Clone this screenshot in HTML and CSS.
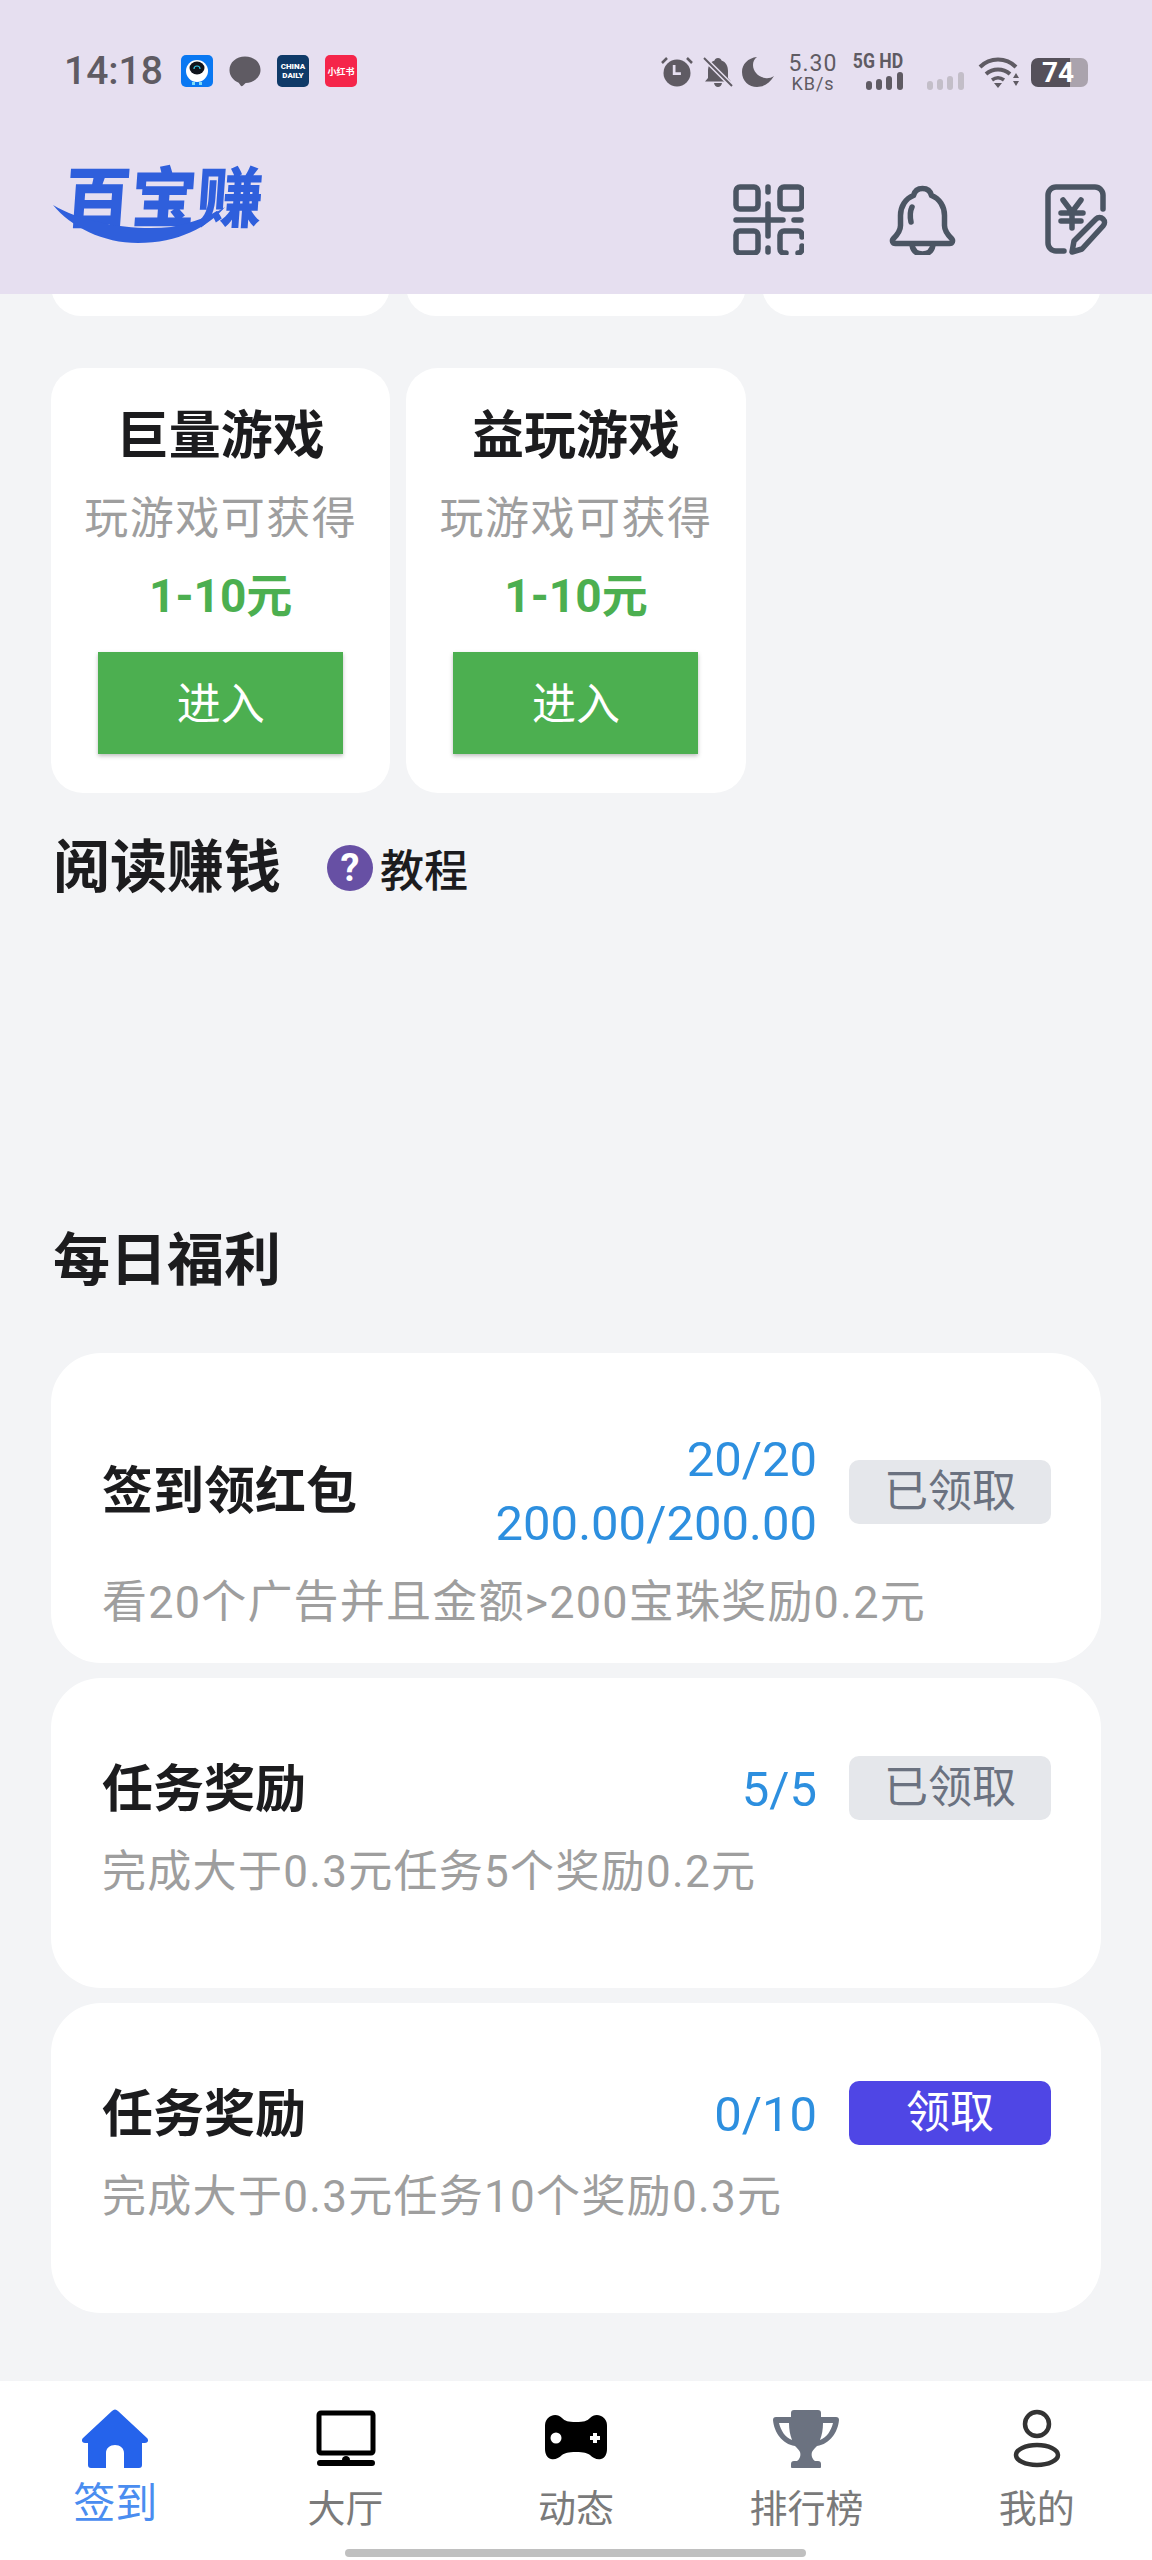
FILE: index.html
```html
<!DOCTYPE html>
<html lang="zh-CN">
<head>
    <meta charset="UTF-8">
    <meta name="viewport" content="width=device-width, initial-scale=1.0">
    <title>百宝赚</title>
    <link rel="stylesheet" href="styles.css">
</head>
<body>
    <div class="page">
        <header class="header">
            <div class="status-bar">
                <div class="status-left">
                    <span class="time">14:18</span>
                    <svg class="app-icon" viewBox="0 0 32 32">
                        <rect width="32" height="32" rx="5" fill="#0a78f2"/>
                        <ellipse cx="16" cy="16" rx="11" ry="11" fill="#fff"/>
                        <ellipse cx="16" cy="13" rx="7.500" ry="6.500" fill="#10141c"/>
                        <path d="M13 14a3 3 0 0 1 6 0" fill="none" stroke="#35c8e8" stroke-width="1.200"/>
                        <rect x="11" y="27" width="3" height="3" fill="#7fdcf5"/>
                        <rect x="18" y="27" width="3" height="3" fill="#7fdcf5"/>
                    </svg>
                    <svg class="app-icon" viewBox="0 0 33 32">
                        <path d="M16.500 1C7.500 1 .5 7 .5 15c0 6 4 11 9.500 13l2 3c.5.8 1.500.8 2.200.2l3-2.700C25.500 28 32.500 22.500 32.500 15c0-8-7-14-16-14z" fill="#5f5b63"/>
                    </svg>
                    <span class="app-badge app-badge-daily">CHINA<br>DAILY</span>
                    <span class="app-badge app-badge-red">小红书</span>
                </div>
                <div class="status-right">
                    <svg class="st-alarm" viewBox="0 0 32 30">
                        <circle cx="16" cy="16" r="13.500" fill="#5f5b63"/>
                        <path d="M12 10h3v8h6v3h-9z" fill="#e6dff0" transform="translate(1 -1) scale(.9 .9)"/>
                        <path d="M1 6l5-5M31 6l-5-5" stroke="#5f5b63" stroke-width="2.500"/>
                    </svg>
                    <svg class="st-mute" viewBox="0 0 30 30">
                        <path d="M15 1c-2 0-3 1-3.500 2.500C7 5 5 9 5 14v7l-3 3.500h26L25 21v-7c0-5-2-9-6.500-10.500C18 2 17 1 15 1zM11 26c.5 2.500 2 4 4 4s3.500-1.500 4-4z" fill="#5f5b63"/>
                        <path d="M1 1l28 28" stroke="#e6dff0" stroke-width="5"/>
                        <path d="M1 1l28 28" stroke="#5f5b63" stroke-width="2"/>
                    </svg>
                    <svg class="st-moon" viewBox="0 0 32 30">
                        <path d="M15 0C6 1 0 7 0 15c0 9 7 15 15 15 7 0 13-4 17-11-3 2-6 2.500-9 2-7-1-12-7-12-13 0-3 1-6 4-8z" fill="#5f5b63"/>
                    </svg>
                    <div class="st-speed"><span>5.30</span><span class="st-speed-unit">KB/s</span></div>
                    <div class="st-net">
                        <span class="st-net-label">5G HD</span>
                        <svg class="st-bars" viewBox="0 0 37 18">
                            <rect x="0" y="9" width="6" height="9" rx="3" fill="#5f5b63"/>
                            <rect x="10" y="7" width="6" height="11" rx="3" fill="#5f5b63"/>
                            <rect x="20" y="4" width="6" height="14" rx="3" fill="#5f5b63"/>
                            <rect x="31" y="0" width="6" height="18" rx="3" fill="#5f5b63"/>
                        </svg>
                    </div>
                    <svg class="st-bars st-bars-off" viewBox="0 0 37 18">
                        <rect x="0" y="9" width="6" height="9" rx="3" fill="#c3bec8"/>
                        <rect x="10" y="7" width="6" height="11" rx="3" fill="#c3bec8"/>
                        <rect x="20" y="4" width="6" height="14" rx="3" fill="#c3bec8"/>
                        <rect x="31" y="0" width="6" height="18" rx="3" fill="#c3bec8"/>
                    </svg>
                    <svg class="st-wifi" viewBox="0 0 41 31">
                        <path d="M2 10c10-10 26-10 36 0" fill="none" stroke="#5f5b63" stroke-width="4"/>
                        <path d="M8 17c7-6 17-6 24 0" fill="none" stroke="#5f5b63" stroke-width="4"/>
                        <path d="M14 23c4-3 8-3 12 0" fill="none" stroke="#5f5b63" stroke-width="3.500"/>
                        <path d="M16 26h8l-4 5zM38 16l3 5h-6zM35 24h6l-3 5z" fill="#5f5b63"/>
                    </svg>
                    <div class="battery">74</div>
                </div>
            </div>
            <div class="topbar">
                <div class="logo">
                    <span class="logo-text">百宝赚</span>
                    <svg class="logo-swoosh" viewBox="0 0 212 78">
                        <path d="M0 40C30 58 80 66 118 62 140 58 160 50 172 42 155 62 125 78 85 78 50 78 18 62 0 40z" fill="#2f5fdc"/>
                    </svg>
                </div>
                <div class="top-icons">
                    <svg class="top-icon" viewBox="0 0 71 71">
                        <g fill="none" stroke="#4b5563" stroke-width="5.500" stroke-linecap="round">
                            <rect x="3" y="3" width="22" height="22" rx="4"/>
                            <rect x="47" y="3" width="22" height="22" rx="4"/>
                            <rect x="3" y="47" width="22" height="22" rx="4"/>
                            <path d="M3 36h47M61 36h7M35 3v5M35 20v32M35 64v4"/>
                            <path d="M53 69h-2a4 4 0 0 1-4-4V51a4 4 0 0 1 4-4h14a4 4 0 0 1 4 4v2M69 62v3a4 4 0 0 1-4 4"/>
                        </g>
                    </svg>
                    <svg class="top-icon" viewBox="0 0 71 71">
                        <g fill="none" stroke="#4b5563" stroke-width="5.500" stroke-linecap="round" stroke-linejoin="round">
                            <path d="M35.500 4.500c-5 0-8 3-9 7-8 3-13 11-13 20v10c0 5-3 9-7 13-2 2-1 5 2 5h54c3 0 4-3 2-5-4-4-7-8-7-13V31.500c0-9-5-17-13-20-1-4-4-7-9-7z"/>
                            <path d="M25 23c-2 4-2 10-1 15"/>
                            <path d="M25 61c1 6 5 9 10.500 9s9.500-3 10.500-9"/>
                        </g>
                    </svg>
                    <svg class="top-icon" viewBox="0 0 71 71">
                        <g fill="none" stroke="#4b5563" stroke-width="5.500" stroke-linecap="round" stroke-linejoin="round">
                            <path d="M62 25V11a8 8 0 0 0-8-8H15a8 8 0 0 0-8 8v48a8 8 0 0 0 8 8h8"/>
                            <path d="M22 16l9 12 9-12M20 29h22M20 37h20M31 28v16"/>
                            <path d="M33 57l22-22c2-2 5-2 7 0s2 5 0 7L41 65l-10 3z"/>
                        </g>
                    </svg>
                </div>
            </div>
        </header>

        <main class="content">
            <div class="game-grid game-grid-cut">
                <div class="game-card game-card-cut"></div>
                <div class="game-card game-card-cut"></div>
                <div class="game-card game-card-cut"></div>
            </div>

            <div class="game-grid">
                <div class="game-card">
                    <h3 class="game-title">巨量游戏</h3>
                    <p class="game-sub">玩游戏可获得</p>
                    <p class="game-price">1-10元</p>
                    <a class="game-btn">进入</a>
                </div>
                <div class="game-card">
                    <h3 class="game-title">益玩游戏</h3>
                    <p class="game-sub">玩游戏可获得</p>
                    <p class="game-price">1-10元</p>
                    <a class="game-btn">进入</a>
                </div>
            </div>

            <div class="section-head">
                <h2 class="section-title">阅读赚钱</h2>
                <span class="help-dot">?</span>
                <span class="help-text">教程</span>
            </div>

            <div class="section-head section-head-daily">
                <h2 class="section-title">每日福利</h2>
            </div>

            <div class="task-list">
                <div class="task-card task-card-first">
                    <div class="task-row">
                        <h3 class="task-title">签到领红包</h3>
                        <div class="task-progress">
                            <span>20/20</span>
                            <span>200.00/200.00</span>
                        </div>
                        <span class="task-btn">已领取</span>
                    </div>
                    <p class="task-desc">看20个广告并且金额&gt;200宝珠奖励0.2元</p>
                </div>
                <div class="task-card">
                    <div class="task-row">
                        <h3 class="task-title">任务奖励</h3>
                        <div class="task-progress"><span>5/5</span></div>
                        <span class="task-btn">已领取</span>
                    </div>
                    <p class="task-desc">完成大于0.3元任务5个奖励0.2元</p>
                </div>
                <div class="task-card">
                    <div class="task-row">
                        <h3 class="task-title">任务奖励</h3>
                        <div class="task-progress"><span>0/10</span></div>
                        <span class="task-btn task-btn-on">领取</span>
                    </div>
                    <p class="task-desc">完成大于0.3元任务10个奖励0.3元</p>
                </div>
            </div>
        </main>

        <nav class="tabbar">
            <div class="tab tab-active">
                <svg class="tab-icon" viewBox="0 0 68 60">
                    <path d="M31 2c2-2 4-2 6 0l29 27c2 2 1 5-2 5h-3v22c0 2-1 3-3 3H43V44c0-5-4-8-9-8s-9 3-9 8v15H10c-2 0-3-1-3-3V34H4c-3 0-4-3-2-5z" fill="#2563eb"/>
                </svg>
                <span class="tab-label">签到</span>
            </div>
            <div class="tab">
                <svg class="tab-icon" viewBox="0 0 68 60">
                    <rect x="7" y="4" width="54" height="40" rx="2" fill="none" stroke="#000" stroke-width="5"/>
                    <path d="M30 51c0-3 2-4 4-4s4 1 4 4h22c2 0 3 1 3 3s-1 3-3 3H8c-2 0-3-1-3-3s1-3 3-3z" fill="#000"/>
                </svg>
                <span class="tab-label">大厅</span>
            </div>
            <div class="tab">
                <svg class="tab-icon" viewBox="0 0 68 60">
                    <path d="M9 7c4-2 8-1 11 2 3 3 6 4 14 4s11-1 14-4c3-3 7-4 11-2 4 2 6 5 6 10v23c0 5-2 9-6 10-4 1-8-1-11-4-3-2-6-3-14-3s-11 1-14 3c-3 3-7 5-11 4-4-1-6-5-6-10V17c0-5 2-8 6-10z" fill="#000"/>
                    <circle cx="14" cy="29" r="5.500" fill="#fff"/>
                    <path d="M51 24h4v3h3v4h-3v3h-4v-3h-3v-4h3z" fill="#fff"/>
                </svg>
                <span class="tab-label">动态</span>
            </div>
            <div class="tab">
                <svg class="tab-icon" viewBox="0 0 68 60">
                    <path d="M19 4c0-2 1-3 3-3h24c2 0 3 1 3 3v4h15c2 0 3 1 3 3-1 12-9 24-22 26-2 2-4 4-5 6-1 3 0 7 3 9h3c2 0 3 1 3 3v3c0 1-1 1-2 1H21c-1 0-2 0-2-1v-3c0-2 1-3 3-3h3c3-2 4-6 3-9-1-2-3-4-5-6C10 35 2 23 1 11c0-2 1-3 3-3h15zM7 14c2 8 6 14 13 17-2-5-3-11-3-17zm54 0H51c0 6-1 12-3 17 7-3 11-9 13-17z" fill="#6b7280" fill-rule="evenodd"/>
                </svg>
                <span class="tab-label">排行榜</span>
            </div>
            <div class="tab">
                <svg class="tab-icon" viewBox="0 0 68 60">
                    <g fill="none" stroke="#333" stroke-width="4.500">
                        <circle cx="34" cy="15" r="12"/>
                        <ellipse cx="34" cy="46" rx="21" ry="10"/>
                    </g>
                </svg>
                <span class="tab-label">我的</span>
            </div>
            <div class="home-bar"></div>
        </nav>
    </div>
</body>
</html>
```

FILE: styles.css
```css
* {
    box-sizing: border-box;
}

body {
    margin: 0;
    background-color: #f3f4f6;
    font-family: Roboto, "Noto Sans CJK SC", sans-serif;
}

h2, h3, p {
    margin: 0;
}

.page {
    width: 1152px;
    height: 2560px;
    display: flex;
    flex-direction: column;
    overflow: hidden;
}

/* header */
.header {
    position: relative;
    z-index: 2;
    height: 294px;
    flex-shrink: 0;
    background-color: #e6dff0;
}

.status-bar {
    height: 165px;
    padding: 53px 64px 0 64px;
    display: flex;
    justify-content: space-between;
    align-items: flex-start;
}

.status-left {
    display: flex;
    align-items: center;
    height: 36px;
    gap: 16px;
}

.time {
    font-size: 39px;
    font-weight: 500;
    line-height: 36px;
    color: #5f5b63;
    margin-right: 2px;
}

.app-icon {
    width: 32px;
    height: 32px;
}

.app-badge {
    width: 32px;
    height: 32px;
    border-radius: 5px;
    display: flex;
    align-items: center;
    justify-content: center;
    color: #fff;
    text-align: center;
}

.app-badge-daily {
    background-color: #0f3a68;
    font-size: 8px;
    line-height: 9px;
    font-weight: 900;
}

.app-badge-red {
    background-color: #f5254a;
    font-size: 9px;
    font-weight: 700;
}

.status-right {
    display: flex;
    align-items: flex-start;
    color: #5f5b63;
}

.st-alarm {
    width: 32px;
    height: 30px;
    margin-top: 4px;
    margin-right: 10px;
}

.st-mute {
    width: 30px;
    height: 30px;
    margin-top: 4px;
    margin-right: 9px;
}

.st-moon {
    width: 32px;
    height: 30px;
    margin-top: 4px;
    margin-right: 14px;
}

.st-speed {
    width: 50px;
    margin-right: 13px;
    display: flex;
    flex-direction: column;
    align-items: center;
    font-size: 23px;
    line-height: 22px;
    letter-spacing: 1px;
}

.st-speed-unit {
    font-size: 18px;
    line-height: 17px;
}

.st-net {
    width: 52px;
    display: flex;
    flex-direction: column;
    align-items: flex-end;
    margin-right: 24px;
}

.st-net-label {
    font-size: 20px;
    line-height: 17px;
    font-weight: 700;
    white-space: nowrap;
    transform: scaleX(0.88);
    transform-origin: right;
}

.st-bars {
    width: 37px;
    height: 18px;
    margin-top: 2px;
    display: block;
}

.st-bars-off {
    margin-top: 19px;
    margin-right: 14px;
}

.st-wifi {
    width: 41px;
    height: 31px;
    margin-top: 4px;
    margin-right: 12px;
}

.battery {
    width: 57px;
    height: 29px;
    margin-top: 5px;
    padding-left: 11px;
    border-radius: 7px;
    background: linear-gradient(90deg, #55505a 68%, #aaa3ad 68%);
    color: #fff;
    font-size: 28px;
    font-weight: 700;
    line-height: 29px;
}

.topbar {
    display: flex;
    justify-content: space-between;
    padding: 0 40px 0 53px;
}

.logo {
    position: relative;
    width: 212px;
    height: 78px;
}

.logo-text {
    display: block;
    padding-left: 12px;
    padding-top: 2px;
    font-size: 66px;
    line-height: 66px;
    font-weight: 900;
    color: #2f5fdc;
    white-space: nowrap;
    transform: skewX(-4deg);
}

.logo-swoosh {
    position: absolute;
    left: 0;
    top: 0;
    width: 212px;
    height: 78px;
}

.top-icons {
    display: flex;
    gap: 83px;
    margin-top: 19px;
}

.top-icon {
    width: 71px;
    height: 71px;
}

/* scrolling content */
.content {
    flex: 1;
}

.game-grid {
    display: grid;
    grid-template-columns: repeat(3, minmax(0, 1fr));
    gap: 16px;
    padding: 0 51px;
    margin-top: 52px;
}

.game-grid-cut {
    margin-top: -38px;
}

.game-card {
    height: 425px;
    padding-top: 39px;
    background-color: #fff;
    border-radius: 32px;
    display: flex;
    flex-direction: column;
    align-items: center;
}

.game-card-cut {
    height: 60px;
    padding: 0;
}

.game-title {
    font-size: 52px;
    line-height: 60px;
    font-weight: 700;
    color: #1c1c1e;
}

.game-sub {
    margin-top: 22px;
    font-size: 44px;
    line-height: 60px;
    letter-spacing: 1.500px;
    color: #9e9e9e;
    white-space: nowrap;
}

.game-price {
    margin-top: 17px;
    font-size: 46px;
    line-height: 60px;
    font-weight: 700;
    color: #4caf50;
}

.game-btn {
    margin-top: 26px;
    width: 245px;
    height: 102px;
    flex-shrink: 0;
    background-color: #4caf50;
    box-shadow: 0 2px 4px rgba(0, 0, 0, 0.25);
    color: #fff;
    font-size: 44px;
    line-height: 106px;
    text-align: center;
}

.section-head {
    margin-top: 40px;
    padding-left: 53px;
    height: 70px;
    display: flex;
    align-items: center;
}

.section-head-daily {
    margin-top: 323px;
}

.section-title {
    width: 274px;
    font-size: 57px;
    line-height: 70px;
    font-weight: 700;
    color: #1c1c1e;
}

.help-dot {
    width: 46px;
    height: 46px;
    border-radius: 50%;
    background-color: #6750a4;
    color: #fff;
    font-size: 38px;
    font-weight: 700;
    line-height: 46px;
    text-align: center;
}

.help-text {
    margin-left: 7px;
    font-size: 44px;
    font-weight: 500;
    color: #1c1c1e;
}

.task-list {
    margin-top: 57px;
    padding: 0 51px;
    display: flex;
    flex-direction: column;
    gap: 15px;
}

.task-card {
    height: 310px;
    padding: 76px 50px 0 51px;
    background-color: #fff;
    border-radius: 50px;
}

.task-card-first {
    padding-top: 75px;
}

.task-row {
    display: flex;
    align-items: center;
}

.task-title {
    flex: 1;
    padding-top: 4px;
    font-size: 51px;
    line-height: 64px;
    font-weight: 700;
    color: #1c1c1e;
}

.task-progress {
    padding-top: 4px;
    display: flex;
    flex-direction: column;
    align-items: flex-end;
    font-size: 49px;
    line-height: 64px;
    color: #2d8fdf;
}

.task-card-first .task-title,
.task-card-first .task-progress {
    padding-top: 0;
}

.task-btn {
    width: 202px;
    height: 64px;
    margin-left: 32px;
    border-radius: 10px;
    background-color: #e5e7eb;
    color: #6b7280;
    font-size: 44px;
    line-height: 64px;
    text-align: center;
}

.task-btn-on {
    background-color: #4f46e5;
    color: #fff;
}

.task-desc {
    margin-top: 20px;
    font-size: 44px;
    line-height: 60px;
    letter-spacing: 1.300px;
    color: #9e9e9e;
    white-space: nowrap;
}

.task-card-first .task-desc {
    margin-top: 17px;
    font-size: 45px;
    letter-spacing: 1.200px;
}

/* bottom tabs */
.tabbar {
    position: relative;
    height: 179px;
    flex-shrink: 0;
    padding-top: 28px;
    background-color: #fff;
    display: grid;
    grid-template-columns: repeat(5, 1fr);
}

.tab {
    display: flex;
    flex-direction: column;
    align-items: center;
}

.tab-icon {
    width: 68px;
    height: 60px;
}

.tab-label {
    margin-top: 15px;
    font-size: 38px;
    line-height: 50px;
    color: #7a7a7a;
}

.tab-active .tab-label {
    margin-top: 10px;
    font-size: 42px;
    color: #4a8df0;
}

.home-bar {
    position: absolute;
    left: 345px;
    bottom: 3px;
    width: 461px;
    height: 8px;
    border-radius: 4px;
    background-color: #c0c0c0;
}
```
